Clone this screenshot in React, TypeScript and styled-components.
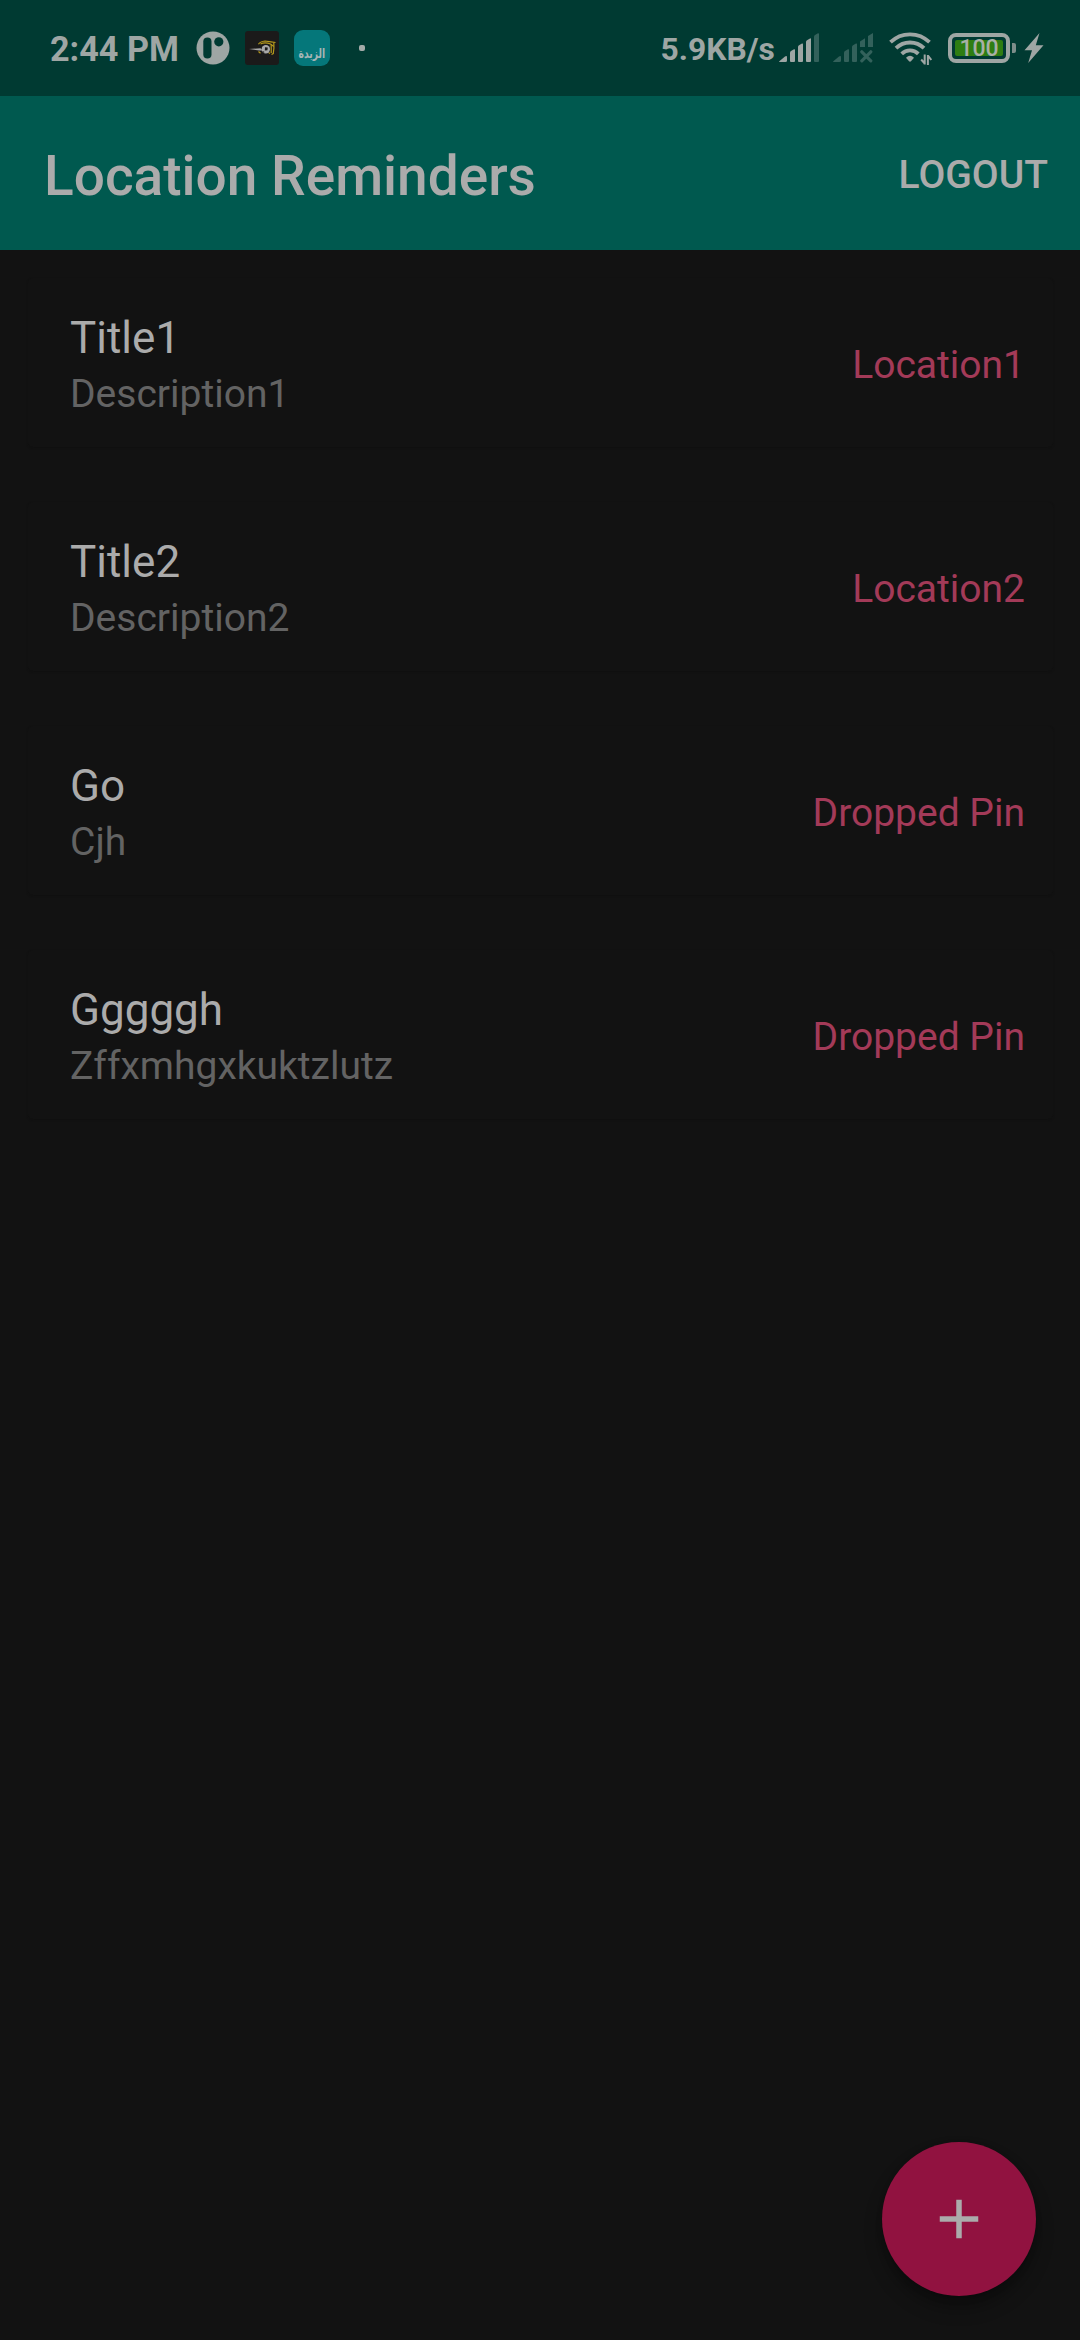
import React from "react";
import styled, { createGlobalStyle } from "styled-components";

const GlobalStyle = createGlobalStyle`
  *, *::before, *::after { box-sizing: border-box; }
  body {
    margin: 0;
    background: #121212;
    font-family: Roboto, "Noto Sans", sans-serif;
  }
`;

const Screen = styled.div`
  display: flex;
  flex-direction: column;
  width: 1080px;
  height: 2340px;
  overflow: hidden;
  background: #121212;
`;

const StatusBar = styled.header`
  display: flex;
  align-items: center;
  justify-content: space-between;
  height: 96px;
  padding: 0 36px 0 50px;
  background: #003a32;
  color: #9ea6a4;
`;

const StatusGroup = styled.div`
  display: flex;
  align-items: center;
  svg {
    display: block;
    flex: none;
  }
`;

const StatusText = styled.span<{ $width: number; $size: number }>`
  width: ${(p) => p.$width}px;
  padding-top: 2px;
  font-size: ${(p) => p.$size}px;
  line-height: 40px;
  font-weight: 700;
  white-space: nowrap;
`;

const NotificationIcons = styled.div`
  display: flex;
  align-items: center;
  gap: 15px;
  margin-left: 16px;
`;

const ButterBadge = styled.div`
  display: flex;
  align-items: flex-end;
  justify-content: center;
  width: 36px;
  height: 36px;
  padding-bottom: 5px;
  border-radius: 9px;
  background: #05777a;
  color: #a5b5b5;
  font: 700 11px/14px "DejaVu Sans", sans-serif;
`;

const BadgeLabel = styled.span`
  transform: scale(0.84, 1.2);
`;

const MoreDot = styled.span`
  width: 6px;
  height: 6px;
  margin-left: 14px;
  border-radius: 2px;
  background: #a4aba9;
`;

const SystemIcons = styled.div`
  display: flex;
  align-items: center;
`;

const SignalGroup = styled.div`
  display: flex;
  gap: 14px;
  margin-right: 16px;
`;

const BatteryShell = styled.div`
  display: flex;
  width: 62px;
  height: 30px;
  margin-left: 16px;
  padding: 3px;
  border: 4px solid #9ea6a4;
  border-radius: 8px;
`;

const BatteryLevel = styled.span`
  display: flex;
  align-items: center;
  justify-content: center;
  width: 48px;
  height: 16px;
  padding-top: 2px;
  border-radius: 2px;
  background: #2e7d12;
  color: #a9b0a6;
  font-size: 23px;
  line-height: 16px;
  font-weight: 500;
`;

const BatteryTip = styled.span`
  width: 4px;
  height: 10px;
  margin: 0 8px 0 2px;
  border-radius: 0 2px 2px 0;
  background: #7d8d8a;
`;

const Toolbar = styled.div`
  display: flex;
  align-items: center;
  justify-content: space-between;
  height: 154px;
  padding: 4px 32px 0 44px;
  background: #00594f;
  color: #ababab;
`;

const ToolbarTitle = styled.h1`
  margin: 0;
  padding-top: 2px;
  font-size: 55px;
  line-height: 64px;
  font-weight: 500;
`;

const LogoutButton = styled.button`
  padding: 0;
  border: 0;
  background: none;
  color: inherit;
  font: 500 39px/46px Roboto, sans-serif;
`;

const ReminderList = styled.main`
  display: flex;
  flex-direction: column;
  flex: 1;
  gap: 55px;
  padding: 27.5px;
`;

const ReminderCard = styled.article`
  display: flex;
  align-items: center;
  justify-content: space-between;
  height: 169px;
  padding: 4px 27.5px 0 42.5px;
  border-radius: 5px;
  box-shadow: 0 1px 2px #101010;
  background: #121212;
`;

const ReminderText = styled.div`
  display: flex;
  flex-direction: column;
`;

const ReminderTitle = styled.h2`
  margin: 0;
  color: #ababab;
  font-size: 44px;
  line-height: 58px;
  font-weight: 400;
`;

const ReminderDescription = styled.p`
  margin: 0;
  padding-top: 3px;
  color: #636363;
  font-size: 39px;
  line-height: 49px;
`;

const ReminderLocation = styled.span`
  padding-top: 2px;
  color: #a33a58;
  font-size: 39px;
  line-height: 46px;
`;

const FabRow = styled.footer`
  display: flex;
  justify-content: flex-end;
  padding: 0 44px 44px;
`;

const AddButton = styled.button`
  display: grid;
  place-items: center;
  width: 154px;
  height: 154px;
  padding: 0;
  border: 0;
  border-radius: 50%;
  background: #911240;
  box-shadow: 0 12px 18px rgba(0, 0, 0, 0.3), 0 3px 6px rgba(0, 0, 0, 0.15);
`;

const reminders = [
  { title: "Title1", description: "Description1", location: "Location1" },
  { title: "Title2", description: "Description2", location: "Location2" },
  { title: "Go", description: "Cjh", location: "Dropped Pin" },
  { title: "Gggggh", description: "Zffxmhgxkuktzlutz", location: "Dropped Pin" },
];

const RoundAppIcon = () => (
  <svg width="34" height="34" viewBox="0 0 34 34">
    <circle cx="17" cy="17" r="16.5" fill="#9ea6a4" />
    <rect x="7.300" y="6.500" width="8.200" height="21" rx="4.100" fill="#003a32" />
    <circle cx="22.800" cy="10.800" r="4.600" fill="#003a32" />
  </svg>
);

const FootballIcon = () => (
  <svg width="34" height="34" viewBox="0 0 34 34">
    <rect width="34" height="34" rx="3" fill="#1b1a1a" />
    <g fill="none" stroke="#b5991c" strokeWidth="1.200">
      <path d="M13.500 13.200Q15 10.500 20 10L26 10.800L30.500 11.500" />
      <path d="M15.500 13Q20 10.800 25.500 13L28.800 15.500" />
      <path d="M28.800 11.500Q29.300 17 28.300 22.500L26.500 23.500M26.200 13.500V22" />
      <path d="M13.500 20.500L15.500 22.300M23.500 21.500L25 22.500" />
    </g>
    <path d="M4 18L15.500 17.300L17.800 19.500L14 19.500z" fill="#a9a9a9" />
    <circle cx="20.800" cy="18.200" r="4.200" fill="#a9a9a9" />
    <path d="M20 16.200l2.800.4-.4 2.600-2.600.2zM17.300 20l2 .8-.3 1.700M22.600 14.200l1 1.600M24.700 19.500l-1.400 1.200" fill="#1b1a1a" />
  </svg>
);

const SignalIcon = ({ offline }: { offline?: boolean }) => {
  const dim = "#33615b";
  const lit = offline ? dim : "#9ea6a4";
  return (
    <svg width="40" height="30" viewBox="0 0 40 30">
      <path d="M0 28.500L6 23.500Q8 22.300 8 24.300V27.500Q8 29 6.500 29H1Q-.4 29 0 28.500z" fill={lit} />
      <path d="M11 19.500Q11 18.700 12 18L15 16.300Q16 16 16 17V28Q16 29 15 29H12Q11 29 11 28z" fill={lit} />
      <path d="M19 14Q19 13 20 12.300L23 10.500Q24 10.200 24 11.200V28Q24 29 23 29H20Q19 29 19 28z" fill={lit} />
      {offline ? (
        <>
          <path d="M27 8.500L32 5.200V14H27zM35 3L40 0V14H35z" fill={lit} />
          <path d="M28.800 18.800l9 9M37.800 18.800l-9 9" stroke={lit} strokeWidth="3.200" strokeLinecap="round" />
        </>
      ) : (
        <>
          <path d="M27 9Q27 8 28 7.300L31 5.400Q32 5 32 6V28Q32 29 31 29H28Q27 29 27 28z" fill={lit} />
          <path d="M35 3.800Q35 2.800 36 2L39 .2Q40 0 40 1V28Q40 29 39 29H36Q35 29 35 28z" fill={dim} />
        </>
      )}
    </svg>
  );
};

const WifiIcon = () => (
  <svg width="43" height="34" viewBox="0 0 43 34">
    <g fill="none" stroke="#9ea6a4" strokeWidth="3.800">
      <path d="M1.500 11.200A28 28 0 0 1 40.500 11.200" />
      <path d="M7 17.200A20 20 0 0 1 35 17.200" />
      <path d="M12.700 22.800A12 12 0 0 1 29.300 22.800" />
    </g>
    <path d="M17 26.800Q21 22.800 25 26.800L22 30.300Q21 31.200 20 30.300z" fill="#9ea6a4" />
    <path d="M35.700 23.500V33.500M38.900 34V24M35.700 32.500L32.200 28.500M38.900 24.500L42.300 29" stroke="#9ea6a4" strokeWidth="2" fill="none" />
  </svg>
);

const BoltIcon = () => (
  <svg width="20" height="30" viewBox="0 0 20 30">
    <path d="M15.500 0L.5 17.200H8L4.200 30L19.500 12.300H11.800z" fill="#9ea6a4" />
  </svg>
);

const PlusIcon = () => (
  <svg width="40" height="40" viewBox="0 0 40 40">
    <path d="M20 .75V39.250M.75 20H39.250" stroke="#ababab" strokeWidth="5.500" />
  </svg>
);

export default function App() {
  return (
    <Screen>
      <GlobalStyle />
      <StatusBar>
        <StatusGroup>
          <StatusText $width={130} $size={34.2}>2:44 PM</StatusText>
          <NotificationIcons>
            <RoundAppIcon />
            <FootballIcon />
            <ButterBadge>
              <BadgeLabel>الزبدة</BadgeLabel>
            </ButterBadge>
            <MoreDot />
          </NotificationIcons>
        </StatusGroup>
        <StatusGroup>
          <StatusText $width={118.5} $size={31.8}>5.9KB/s</StatusText>
          <SystemIcons>
            <SignalGroup>
              <SignalIcon />
              <SignalIcon offline />
            </SignalGroup>
            <WifiIcon />
            <BatteryShell>
              <BatteryLevel>100</BatteryLevel>
            </BatteryShell>
            <BatteryTip />
            <BoltIcon />
          </SystemIcons>
        </StatusGroup>
      </StatusBar>
      <Toolbar>
        <ToolbarTitle>Location Reminders</ToolbarTitle>
        <LogoutButton type="button">LOGOUT</LogoutButton>
      </Toolbar>
      <ReminderList>
        {reminders.map((item) => (
          <ReminderCard key={item.title}>
            <ReminderText>
              <ReminderTitle>{item.title}</ReminderTitle>
              <ReminderDescription>{item.description}</ReminderDescription>
            </ReminderText>
            <ReminderLocation>{item.location}</ReminderLocation>
          </ReminderCard>
        ))}
      </ReminderList>
      <FabRow>
        <AddButton type="button" aria-label="Add reminder">
          <PlusIcon />
        </AddButton>
      </FabRow>
    </Screen>
  );
}
